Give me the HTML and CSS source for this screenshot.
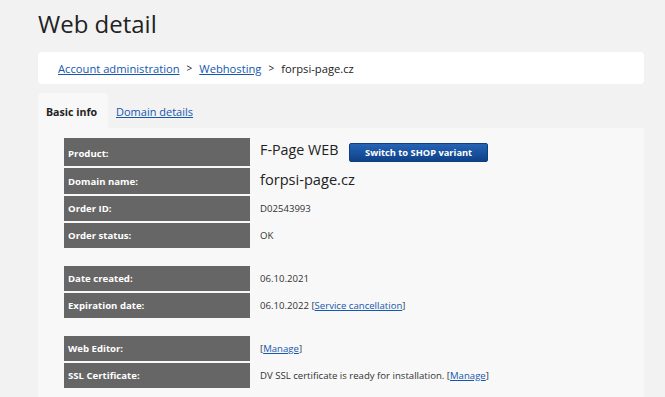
FILE: index.html
```html
<!DOCTYPE html>
<html lang="en">
<head>
  <meta charset="UTF-8" />
  <title>Web detail</title>
  <link rel="stylesheet" href="styles.css">
</head>
<body>
  <div class="page">
    <h1 class="title">Web detail</h1>

    <div class="crumbs">
      <a href="#">Account administration</a>
      <span class="sep">&gt;</span>
      <a href="#">Webhosting</a>
      <span class="sep">&gt;</span>
      <span>forpsi-page.cz</span>
    </div>

    <div class="tabs">
      <span class="tab active">Basic info</span>
      <a class="tab" href="#">Domain details</a>
    </div>

    <div class="panel">
      <div class="group">
        <div class="label tall">Product:</div>
        <div class="value big">F-Page WEB <button class="btn">Switch to SHOP variant</button></div>
        <div class="label mid">Domain name:</div>
        <div class="value big domain">forpsi-page.cz</div>
        <div class="label">Order ID:</div>
        <div class="value">D02543993</div>
        <div class="label">Order status:</div>
        <div class="value">OK</div>
      </div>

      <div class="group">
        <div class="label">Date created:</div>
        <div class="value">06.10.2021</div>
        <div class="label">Expiration date:</div>
        <div class="value">06.10.2022 [<a href="#">Service cancellation</a>]</div>
      </div>

      <div class="group">
        <div class="label">Web Editor:</div>
        <div class="value">[<a href="#">Manage</a>]</div>
        <div class="label">SSL Certificate:</div>
        <div class="value">DV SSL certificate is ready for installation. [<a href="#">Manage</a>]</div>
      </div>
    </div>
  </div>
</body>
</html>
```

FILE: styles.css
```css
* { margin: 0; padding: 0; box-sizing: border-box; }
html, body { height: 100%; overflow: hidden; }

body {
  background: #f2f2f2;
  font-family: "Open Sans", "Noto Sans", sans-serif;
  color: #333;
  font-size: 9.6px;
}

a { color: #1558b0; }

.page { padding: 0 21px 0 38px; }

.title {
  font-size: 24px;
  font-weight: 400;
  color: #222;
  line-height: 30px;
  padding-top: 9px;
  margin-bottom: 13px;
}

.crumbs {
  background: #fff;
  border-radius: 4px;
  height: 32px;
  padding: 0 20px;
  display: flex;
  align-items: center;
  gap: 6px;
  font-size: 11.2px;
  color: #222;
}
.crumbs .sep { font-size: 10px; margin: 0 1px; }

.tabs {
  display: flex;
  margin-top: 9px;
  height: 35px;
  font-size: 11px;
}
.tab {
  padding: 2px 8px 0;
  display: flex;
  align-items: center;
}
.tab.active {
  background: #f8f8f8;
  border-radius: 4px 4px 0 0;
  font-weight: 700;
  color: #222;
  width: 70px;
  white-space: nowrap;
  font-size: 10.6px;
}

.panel {
  background: #f8f8f8;
  padding: 10px 26px 20px;
  min-height: 300px;
}

.group {
  display: grid;
  grid-template-columns: 186px auto;
  row-gap: 2px;
  margin-bottom: 18px;
}

.label {
  background: #666;
  color: #fff;
  font-weight: 700;
  height: 25px;
  padding: 0 4px;
  display: flex;
  align-items: center;
}
.label.tall { height: 28px; padding-top: 2px; }
.label.mid { height: 26px; }

.value {
  padding-left: 10px;
  display: flex;
  align-items: center;
  white-space: pre;
}
.value.big { font-size: 14.3px; color: #222; align-items: flex-start; padding-top: 2px; }
.value.domain { font-size: 14.6px; padding-top: 1px; }

.btn {
  margin-left: 7px;
  margin-top: 3px;
  width: 139px;
  height: 19px;
  border: 1px solid #0d3f80;
  border-radius: 2px;
  background: linear-gradient(#2463b5, #0e4289);
  color: #fff;
  font-family: "Open Sans", "Noto Sans", sans-serif;
  font-weight: 700;
  font-size: 9.3px;
}
```
